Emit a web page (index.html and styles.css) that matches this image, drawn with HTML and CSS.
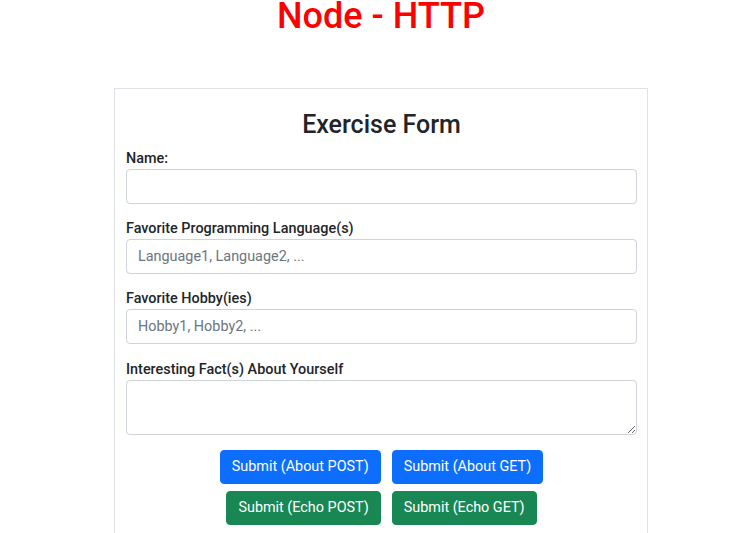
FILE: index.html
```html
<!DOCTYPE html>
<html lang="en">
<head>
<meta charset="utf-8">
<title>Node - HTTP</title>
<link rel="stylesheet" href="styles.css">
</head>
<body>
<div class="page">
  <h1 class="title">Node - HTTP</h1>
  <div class="card">
    <h2 class="card-title">Exercise Form</h2>
    <form class="form">
      <div class="group">
        <label class="label" for="name">Name:</label>
        <input class="control" id="name" type="text">
      </div>
      <div class="group">
        <label class="label" for="lang">Favorite Programming Language(s)</label>
        <input class="control" id="lang" type="text" placeholder="Language1, Language2, ...">
      </div>
      <div class="group group-wide">
        <label class="label" for="hobby">Favorite Hobby(ies)</label>
        <input class="control" id="hobby" type="text" placeholder="Hobby1, Hobby2, ...">
      </div>
      <div class="group group-last">
        <label class="label" for="fact">Interesting Fact(s) About Yourself</label>
        <textarea class="control area" id="fact"></textarea>
      </div>
      <div class="buttons">
        <button type="button" class="btn btn-blue">Submit (About POST)</button>
        <button type="button" class="btn btn-blue">Submit (About GET)</button>
      </div>
      <div class="buttons">
        <button type="button" class="btn btn-green">Submit (Echo POST)</button>
        <button type="button" class="btn btn-green">Submit (Echo GET)</button>
      </div>
    </form>
  </div>
</div>
</body>
</html>
```

FILE: styles.css
```css
* { box-sizing: border-box; }
html, body {
  margin: 0;
  padding: 0;
  background: #fff;
  font-family: Roboto, "Liberation Sans", sans-serif;
  color: #212529;
}
.page {
  width: 534px;
  margin-left: 114px;
}
.title {
  margin: 0;
  height: 88px;
  font-size: 36px;
  line-height: 32px;
  font-weight: 500;
  color: #ff0000;
  text-align: center;
}
.card {
  border: 1px solid #dee2e6;
  border-bottom: none;
  padding: 14px 10px 40px 11px;
  min-height: 460px;
}
.card-title {
  margin: 0 0 1px;
  text-align: center;
  font-size: 25px;
  line-height: 44px;
  font-weight: 500;
}
.form {
  display: flex;
  flex-direction: column;
}
.group {
  display: flex;
  flex-direction: column;
  margin-bottom: 14px;
}
.group-wide { margin-bottom: 15px; }
.group-last { margin-bottom: 15px; }
.label {
  font-size: 14.4px;
  line-height: 21px;
  font-weight: 500;
}
.control {
  display: block;
  width: 100%;
  height: 35px;
  padding: 6px 11px;
  font-family: inherit;
  font-size: 14.4px;
  line-height: 21px;
  color: #212529;
  background: #fff;
  border: 1px solid #ced4da;
  border-radius: 4px;
  outline: none;
}
.control::placeholder { color: #6c757d; }
.area {
  height: 55px;
  resize: vertical;
}
.buttons {
  display: flex;
  justify-content: center;
  gap: 11px;
  margin-bottom: 7px;
}
.btn {
  height: 34px;
  padding: 0 11px;
  font-family: inherit;
  font-size: 14.4px;
  line-height: 32px;
  font-weight: 400;
  color: #fff;
  border: 1px solid transparent;
  border-radius: 4px;
}
.btn-blue { background: #0d6efd; border-color: #0d6efd; }
.btn-green { background: #198754; border-color: #198754; }
```
